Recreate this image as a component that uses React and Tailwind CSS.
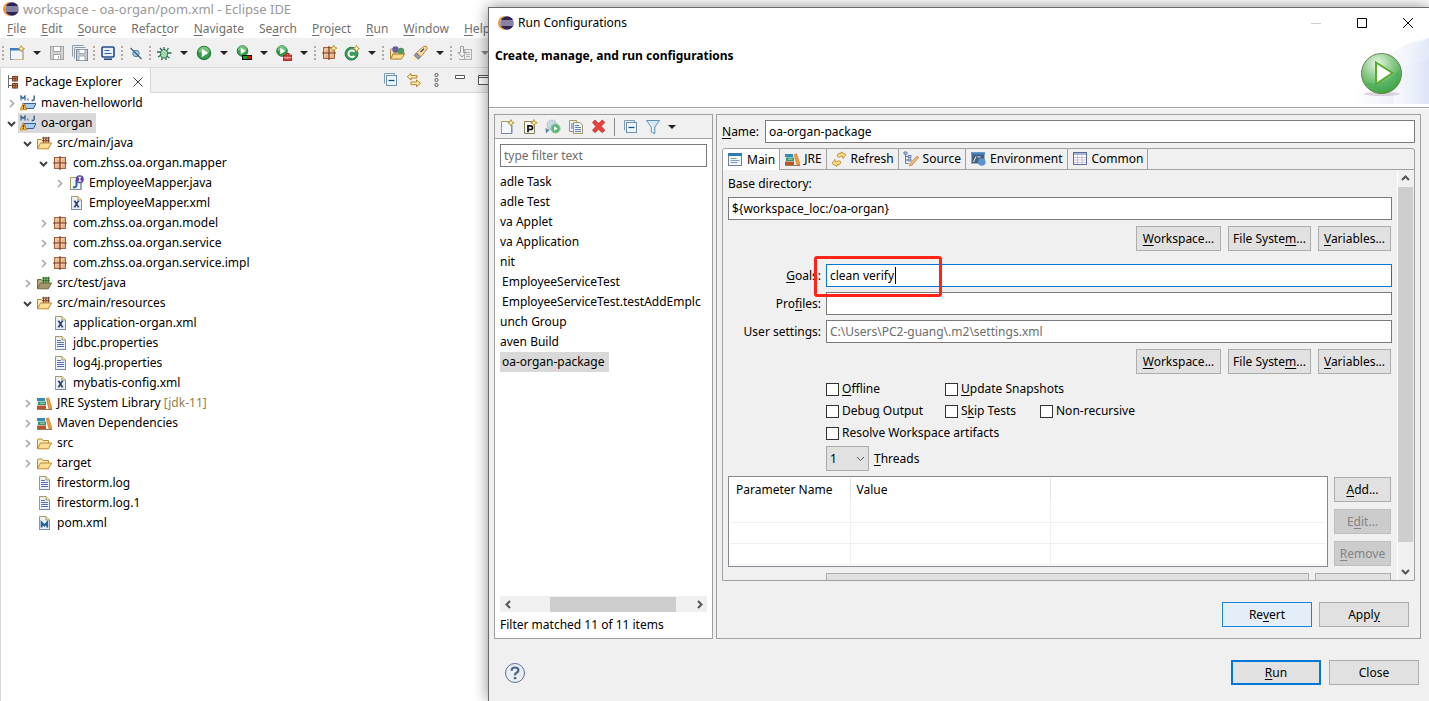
import { useState } from "react";

const Svg = ({ children, className = "" }) => (
  <svg width="16" height="16" viewBox="0 0 16 16" fill="none" className={`shrink-0 ${className}`} aria-hidden="true">
    {children}
  </svg>
);

const Star = ({ x, y }) => (
  <path
    transform={`translate(${x} ${y})`}
    d="M0-3.2L1-1 3.2 0 1 1 0 3.2-1 1-3.2 0-1-1Z"
    fill="#fff3b8"
    stroke="#b8902c"
    strokeWidth="0.9"
  />
);

const EclipseIcon = () => (
  <Svg>
    <circle cx="7" cy="8" r="7" fill="#f7941e" />
    <circle cx="9" cy="8" r="7" fill="#fff" />
    <circle cx="9" cy="8" r="6.8" fill="#2c2255" />
    <path d="M2.4 6h13.2M2 8h14M2.4 10h13.2" stroke="#e4e0ee" strokeWidth="1" />
  </Svg>
);

const NewWizardIcon = () => (
  <Svg>
    <rect x="1.5" y="3.5" width="12.5" height="11" fill="#eef6fb" stroke="#7d8ca0" />
    <rect x="1" y="3" width="11" height="2.5" fill="#3c7ec2" />
    <path d="M4 14.5h10V7" stroke="#d0bc78" strokeWidth="1.2" />
    <Star x={12.3} y={3.7} />
  </Svg>
);

const SaveIcon = () => (
  <Svg>
    <rect x="1.5" y="1.5" width="13" height="13" fill="#d2d2d2" stroke="#a3a3a3" />
    <rect x="4.5" y="1.5" width="7" height="5" fill="#fff" stroke="#a3a3a3" />
    <rect x="4.5" y="9.5" width="7" height="5" fill="#fff" stroke="#a3a3a3" />
    <path d="M9.5 11v2.5" stroke="#a3a3a3" />
  </Svg>
);

const SaveAllIcon = () => (
  <Svg>
    <path d="M.5 11.5V.5h11M2.5 13.5v-11h11" stroke="#8f9aa3" />
    <rect x="4.5" y="4.5" width="11" height="11" fill="#c4ced4" stroke="#7d8a94" />
    <rect x="7" y="4.5" width="6" height="4" fill="#fff" stroke="#8f9aa3" strokeWidth=".8" />
    <rect x="7" y="11" width="6" height="4.5" fill="#fff" stroke="#8f9aa3" strokeWidth=".8" />
  </Svg>
);

const ConsoleIcon = () => (
  <Svg>
    <rect x="2" y="2" width="12" height="10" rx="1" fill="#e8f0fa" stroke="#24498c" strokeWidth="1.6" />
    <path d="M4.5 5.5h5M4.5 8.5h7" stroke="#2f62a6" />
    <path d="M4 14.2h8" stroke="#24498c" strokeWidth="1.6" />
  </Svg>
);

const SkipIcon = () => (
  <Svg>
    <circle cx="8" cy="8.5" r="3.2" fill="#a6cbe0" stroke="#4a81a8" />
    <path d="M2.5 3l11 11" stroke="#3d5f80" strokeWidth="1.2" />
  </Svg>
);

const DebugIcon = () => (
  <Svg>
    <path
      d="M8 2v2M4 3l2 2.5M12.5 3L10.5 6M1 7h4M11 8h4.5M2 12l3-2M5.5 15l1-3M10 15V12M13.5 13l-3-2"
      stroke="#2c6a54"
      strokeWidth="1.3"
    />
    <ellipse cx="8" cy="8.8" rx="3.6" ry="4.2" fill="#8ecb9b" stroke="#2c7a56" />
    <path d="M6 7l4 4M6 10l3 2M7 5.5l4 3" stroke="#d9f2d5" strokeWidth=".8" />
  </Svg>
);

const PlayDisc = ({ cx = 8, cy = 8, r = 7 }) => (
  <g transform={`translate(${cx} ${cy}) scale(${r / 7})`}>
    <circle r="6.6" fill="#37a04c" stroke="#1d7a3a" strokeWidth="1.2" />
    <path d="M-5.6-1A5.6 5.6 0 0 1 5.6-1Q0 1-5.6-1Z" fill="#74c37b" />
    <path d="M-2.2-4.2L4.2 0-2.2 4.2Z" fill="#fff" />
  </g>
);

const RunIcon = () => (
  <Svg>
    <PlayDisc />
  </Svg>
);

const CoverageIcon = () => (
  <Svg>
    <PlayDisc cx={6.5} cy={6} r={5.6} />
    <rect x="6" y="10" width="10" height="5" fill="#111" />
    <rect x="7" y="11" width="4" height="3" fill="#0a2" />
    <rect x="11" y="11" width="4" height="3" fill="#d11" />
  </Svg>
);

const ExternalIcon = () => (
  <Svg>
    <PlayDisc cx={6} cy={6} r={5.6} />
    <path d="M10 10V8.6h3V10" stroke="#a82424" strokeWidth="1.2" />
    <rect x="7.5" y="10.2" width="8" height="5.2" fill="#d94343" stroke="#a82424" />
    <path d="M7.5 12.7h8M11.5 12v1.6" stroke="#fbd0d0" strokeWidth=".8" />
  </Svg>
);

const Grid = () => (
  <>
    <rect x="2.5" y="2.5" width="11" height="11" fill="#e5b085" stroke="#a4633f" />
    <path d="M4 7V4h3M9.5 7V4H12M4 12V9h3M9.5 12V9H12" stroke="#f5d9b4" />
    <path d="M8 1v14M1 8h14" stroke="#7d3f28" strokeWidth="1.2" />
  </>
);

const PackageIcon = () => (
  <Svg>
    <Grid />
  </Svg>
);

const NewPackageIcon = () => (
  <Svg>
    <Grid />
    <Star x={12.8} y={3.2} />
  </Svg>
);

const NewClassIcon = () => (
  <Svg>
    <circle cx="7.5" cy="8.7" r="6.4" fill="#3d9c5b" stroke="#1c7a41" />
    <path d="M10.4 6.7A3.3 3.3 0 1 0 10.4 10.8" stroke="#fff" strokeWidth="1.9" />
    <Star x={12.5} y={3.5} />
  </Svg>
);

const Folder = () => (
  <>
    <path d="M1.5 13.5V5q0-1 1-1H6l1 1.5h5.5V8" fill="#fbe9b8" stroke="#b98a36" />
    <path d="M1.5 13.8L4.5 8H15.6L12.3 13.8Z" fill="#fbdd94" stroke="#b98a36" strokeLinejoin="round" />
  </>
);

const OpenTypeIcon = () => (
  <Svg>
    <Folder />
    <circle cx="6.5" cy="4.5" r="3.2" fill="#6a58b0" />
    <circle cx="12" cy="6" r="3.2" fill="#4a9a5c" />
    <path d="M1.5 14L4.5 9.2H15.6L12.3 14Z" fill="#fbdd94" stroke="#b98a36" strokeLinejoin="round" />
  </Svg>
);

const TorchIcon = () => (
  <Svg>
    <path d="M0 16L2.5 9 7.5 13.5Z" fill="#fff0a0" />
    <path d="M4 8l4.5 4.2-2.3 2L2.2 10.5Z" fill="#8d99ad" stroke="#6a7284" strokeWidth=".8" />
    <path d="M4.5 7.5L12 1.2q3.2-.8 3.3 2.3L9 11.8Z" fill="#f8dca2" stroke="#c0843c" />
    <path d="M8.5 7L12 3.7" stroke="#2f4d80" strokeWidth="1.3" />
  </Svg>
);

const DownloadIcon = () => (
  <Svg>
    <rect x="7.5" y="4.5" width="7" height="10" fill="#e9e9e9" stroke="#b0b0b0" />
    <path d="M9 7.5h4M9 9.5h4M9 11.5h4" stroke="#b8b8b8" />
    <path d="M3.5 1.5h3v6H9l-4 4.5L1 7.5h2.5Z" fill="#f2f2f2" stroke="#9b9b9b" />
    <path d="M2 14.5h5" stroke="#aaa" />
  </Svg>
);

const ExplorerIcon = () => (
  <Svg>
    <path d="M3.5 1v13M3.5 4.5H7M3.5 11.5H7" stroke="#6c6c6c" />
    <rect x="7.5" y="2.5" width="5" height="4.5" fill="#d08b54" stroke="#7a3f22" />
    <rect x="7.5" y="9.5" width="5" height="4.5" fill="#d08b54" stroke="#7a3f22" />
    <path d="M10 2v5.5M7 4.7h6M10 9v5.5M7 11.7h6" stroke="#7a3f22" />
  </Svg>
);

const ProjectIcon = () => (
  <Svg>
    <path d="M1 5.5V1l2 2.6L5 1v4.5" stroke="#2f5f96" strokeWidth="1.2" />
    <path d="M7 3.5l1.5 2M8.5 3.5L7 5.5" stroke="#5586b8" />
    <path d="M14.2.5v3.8q0 1.6-2.6 1" stroke="#2f5f96" strokeWidth="1.4" />
    <path d="M4.5 8.5H16L13.5 13.5H5.5Z" fill="#a9cdf0" stroke="#2c5fa8" strokeLinejoin="round" />
    <path d="M2.5 8.5h11" stroke="#2c5fa8" />
    <path d="M3.4 7.8L6.8 14.8H0Z" fill="#f5b73c" stroke="#c4821c" strokeWidth=".8" />
    <path d="M3.4 10v2.4M3.4 13v1" stroke="#5c3400" strokeWidth="1.1" />
  </Svg>
);

const SourceFolder = ({ test }) => (
  <Svg>
    <path d="M1.5 13.5V4.5h4l1 1.2h6V9" fill={test ? "#b9ac86" : "#fbe9b8"} stroke={test ? "#75693c" : "#b98a36"} />
    <rect x="6.5" y="2.5" width="7" height="6" fill={test ? "#7fc06a" : "#e8b88a"} />
    <path d="M6.2 3h7.6M6.2 5.6h7.6M7.5 1.8v6.5M10 1.8v6.5M12.5 1.8v6.5" stroke={test ? "#286b2c" : "#6d4030"} strokeWidth=".9" />
    <path d="M1.5 13.8L4.5 8H15.6L12.3 13.8Z" fill={test ? "#a3966a" : "#fbdd94"} stroke={test ? "#75693c" : "#b98a36"} strokeLinejoin="round" />
  </Svg>
);

const FolderIcon = () => (
  <Svg>
    <Folder />
  </Svg>
);

const Page = () => (
  <>
    <path d="M3.5 1.5H10l3.5 3.5v9.5h-10Z" fill="#eaf1fb" stroke="#a79a5c" />
    <path d="M10 1.5V5h3.5" fill="#f3e2a6" stroke="#a79a5c" />
    <path d="M3 14.5h10.5V6" stroke="#7687a8" />
  </>
);

const XmlFileIcon = () => (
  <Svg>
    <Page />
    <path d="M6.6 6l3.8 6M10.4 6l-3.8 6" stroke="#27456f" strokeWidth="1.6" />
    <path d="M5.6 6.2h2.2M9.4 6.2h2M5.6 11.9h2M9.4 11.9h2" stroke="#27456f" strokeWidth=".8" />
  </Svg>
);

const TextFileIcon = () => (
  <Svg>
    <Page />
    <path d="M5 5.5h4M5 7.5h7M5 9.5h7M5 11.5h7" stroke="#5373aa" />
  </Svg>
);

const MavenFileIcon = () => (
  <Svg>
    <Page />
    <path d="M5.6 12.5v-5l2.8 3 2.8-3v5" stroke="#24629c" strokeWidth="1.9" />
  </Svg>
);

const InterfaceFileIcon = () => (
  <Svg>
    <path d="M2.5 2.5H13v12H2.5Z" fill="#eef4fc" stroke="#a79a5c" />
    <path d="M8.5 5v5.6q-.4 2.2-3.5 1.5" stroke="#2c69a8" strokeWidth="2" />
    <path d="M2.5 14.5H13V8" stroke="#7687a8" />
    <circle cx="11.8" cy="4.2" r="4" fill="#5b43a0" />
    <path d="M11.8 2.2v4M10.3 2.3h3M10.3 6.1h3" stroke="#fff" strokeWidth="1.1" />
  </Svg>
);

const LibraryIcon = () => (
  <Svg>
    <path d="M1 3h8v3H1Z" fill="#2f8cb8" />
    <path d="M2 6.5h8V10H2Z" fill="#37936a" />
    <path d="M1 10.5h9V14H1Z" fill="#b5562c" />
    <path d="M4 8.2h4.5" stroke="#a8dcb9" />
    <path d="M10.2 3.8l2.3-1L16 13.4l-2.9.8Z" fill="#f0a03a" stroke="#c87420" strokeWidth=".7" />
    <path d="M1 14.5h15" stroke="#87583b" strokeWidth=".8" />
  </Svg>
);

const CollapseAllIcon = () => (
  <Svg>
    <path d="M2.5 11.5v-10h10v2" stroke="#7e9dbb" />
    <rect x="4.5" y="3.5" width="10" height="10" fill="#eaf5fc" stroke="#7090ae" />
    <path d="M6.5 8.5h6" stroke="#12528c" strokeWidth="1.2" />
  </Svg>
);

const LinkIcon = () => (
  <Svg>
    <path d="M6 1.5L2.2 4.7 6 8V6h6V3.5H6Z" fill="#fdf0c4" stroke="#b9821d" strokeLinejoin="round" />
    <path d="M11.5 8l4 3.3-4 3.3v-2H6V10h5.5Z" fill="#fdf0c4" stroke="#b9821d" strokeLinejoin="round" />
  </Svg>
);

const ViewMenuIcon = () => (
  <Svg>
    <g stroke="#5b5b5b">
      <circle cx="8.5" cy="3" r="1.6" />
      <circle cx="8.5" cy="8" r="1.6" />
      <circle cx="8.5" cy="13" r="1.6" />
    </g>
  </Svg>
);

const NewConfigIcon = () => (
  <Svg>
    <path d="M2.5 2.5h10v12h-10Z" fill="#f2f7fd" stroke="#a79a5c" />
    <path d="M2.5 14.5H13V6" stroke="#7687a8" />
    <Star x={12} y={3.8} />
  </Svg>
);

const PrototypeIcon = () => (
  <Svg>
    <path d="M2.5 2.5h10v12h-10Z" fill="#f2f7fd" stroke="#8c8450" />
    <path d="M6 13.2V6.9h2.5q2 0 2 1.8t-2 1.8H6" stroke="#111" strokeWidth="1.7" />
    <Star x={12} y={3.8} />
  </Svg>
);

const ExportIcon = () => (
  <Svg>
    <circle cx="7" cy="6" r="4.8" fill="#c8d8e4" stroke="#9aafc0" strokeDasharray="2 1" />
    <path d="M.5 9L1 14.5 4.5 11Z" fill="#5884b0" />
    <circle cx="10.5" cy="9.5" r="4.6" fill="#5cb677" stroke="#8bcb9c" />
    <path d="M9.1 7.3l3.6 2.2-3.6 2.2Z" fill="#fff" />
  </Svg>
);

const DuplicateIcon = () => (
  <Svg>
    <path d="M1.5 1.5h7v11h-7Z" fill="#eef3fa" stroke="#a79a5c" />
    <path d="M3 5h3M3 7h3M3 9h3" stroke="#5373aa" />
    <path d="M5.5 3.5H12l2.5 2.5v8.5h-9Z" fill="#eef3fa" stroke="#a79a5c" />
    <path d="M7 6.5h4M7 8.5h6M7 10.5h6M7 12.5h6" stroke="#5373aa" strokeWidth=".9" />
  </Svg>
);

const DeleteIcon = () => (
  <Svg>
    <path
      d="M1.5 3.5L4 1 7.5 4.4 11.3 1 13.8 3.500 10.2 7.300 13.8 11.200 11.300 13.700 7.500 10.200 4 13.700 1.500 11.200 4.900 7.400Z"
      fill="#e8423f"
      stroke="#c22b2b"
      strokeWidth=".8"
    />
  </Svg>
);

const FilterIcon = () => (
  <Svg>
    <path d="M1.5 1.5h13L9.8 8v6.8L6.3 13V8Z" fill="#d3e8f7" stroke="#5f8fbd" strokeLinejoin="round" />
    <path d="M4.5 3.5l3 4v5" stroke="#fff" />
  </Svg>
);

const MainTabIcon = () => (
  <Svg>
    <rect x="1.5" y="1.5" width="13" height="12" fill="#f3f8fd" stroke="#65839f" />
    <path d="M1 2.5h14" stroke="#2f7cb5" strokeWidth="3" />
    <path d="M3.5 6.5h6M3.5 8.5h9M3.5 10.5h7" stroke="#7f9bc2" />
  </Svg>
);

const RefreshIcon = () => (
  <Svg>
    <path d="M6 5q.5-3.5 4.5-3L10 1l5 2.500-3 4-.6-2.300Q9 4.600 8.500 6.500Z" fill="#fbdd83" stroke="#b98226" strokeWidth=".8" />
    <path d="M10 11q-.5 3.500-4.500 3l.5 1.400-5-3 3-4 .6 2.300q2.400.8 2.900-1.200Z" fill="#fbdd83" stroke="#b98226" strokeWidth=".8" />
  </Svg>
);

const SourceTabIcon = () => (
  <Svg>
    <path d="M2.5 3v9.5h3M2.5 5.5h3M2.5 9h3" stroke="#5c7fae" />
    <path d="M1 1h3v2H1ZM5 4.5h3v2H5ZM5 8h3v2H5Z" fill="#d8e4f4" stroke="#3f669c" strokeWidth=".8" />
    <path d="M14 5l1.6 1.5L9.100 14l-2.600 1 .8-2.700Z" fill="#f6c17b" stroke="#c07c38" strokeWidth=".8" />
  </Svg>
);

const EnvironmentIcon = () => (
  <Svg>
    <rect x="1.5" y="1.5" width="13" height="11" fill="#46617f" stroke="#9daab8" />
    <path d="M1 2.5h14" stroke="#3f86c6" strokeWidth="2" />
    <path d="M3.5 11L6 5.5M7.5 6h3" stroke="#e8eef5" />
    <circle cx="11.8" cy="11" r="3.8" fill="#5c93cf" />
  </Svg>
);

const CommonIcon = () => (
  <Svg>
    <rect x="1.5" y="1.5" width="13" height="12" fill="#fff" stroke="#5a6c98" />
    <path d="M2 3h12" stroke="#a9b8d8" strokeWidth="2" />
    <path d="M5.5 4v9M10 4v9M2 6.5h12M2 9h12M2 11.5h12" stroke="#b9b3c8" strokeWidth=".8" />
  </Svg>
);

const HeaderArt = () => (
  <svg width="80" height="66" viewBox="0 0 80 66" className="shrink-0" aria-hidden="true">
    <defs>
      <linearGradient id="sky" x1="0" x2="1">
        <stop offset="0" stopColor="#ffffff" />
        <stop offset="1" stopColor="#dde4f6" />
      </linearGradient>
      <radialGradient id="ball" cx=".4" cy=".25" r=".8">
        <stop offset="0" stopColor="#e9f6e4" />
        <stop offset=".5" stopColor="#86c886" />
        <stop offset="1" stopColor="#2ea32e" />
      </radialGradient>
    </defs>
    <path d="M0 66Q30 8 80 0V66Z" fill="url(#sky)" opacity=".55" />
    <path d="M4 66Q30 28 80 22V66Z" fill="url(#sky)" />
    <path d="M44 66Q46 16 80 0V66Z" fill="url(#sky)" opacity=".7" />
    <ellipse cx="33" cy="56" rx="18" ry="2" fill="#cdc3cf" opacity=".7" />
    <circle cx="32.5" cy="35.5" r="20" fill="url(#ball)" stroke="#67834e" />
    <path d="M15 43Q30 52 50 32Q52 44 42 51Q26 58 15 43Z" fill="#48a860" opacity=".5" />
    <path d="M27 24.5V46l16.500-11Z" fill="#fff" stroke="#57ad2c" strokeWidth="2" />
  </svg>
);

const HelpIcon = () => (
  <svg width="22" height="22" viewBox="0 0 22 22" fill="none" aria-hidden="true">
    <circle cx="11" cy="11" r="9.5" fill="#e9eef5" stroke="#5d7190" />
    <path d="M7.6 8.8q0-3.3 3.4-3.3t3.4 2.7q0 1.5-1.8 2.6T11 13.4" stroke="#4d6388" strokeWidth="2.2" />
    <path d="M9.8 15h2.500v2.200H9.800Z" fill="#4d6388" />
  </svg>
);

const Caret = ({ fill = "#222" }) => (
  <svg width="8" height="4" viewBox="0 0 8 4" className="shrink-0" aria-hidden="true">
    <path d="M0 0h8L4 4Z" fill={fill} />
  </svg>
);

const CHEVRONS = {
  right: "M3 1l3.5 3.5L3 8",
  left: "M6 1L2.5 4.5 6 8",
  down: "M1 3l3.5 3.5L8 3",
  up: "M1 6l3.5-3.5L8 6",
};

const Chevron = ({ dir, color = "#555", width = 2 }) => (
  <svg width="9" height="9" viewBox="0 0 9 9" fill="none" className="shrink-0" aria-hidden="true">
    <path d={CHEVRONS[dir]} stroke={color} strokeWidth={width} />
  </svg>
);

// "&" marks the mnemonic letter
const Label = ({ text }) => {
  const at = text.indexOf("&");
  if (at < 0) return text;
  return (
    <>
      {text.slice(0, at)}
      <u className="underline underline-offset-2">{text[at + 1]}</u>
      {text.slice(at + 2)}
    </>
  );
};

const MENUS = ["&File", "&Edit", "&Source", "Refac&tor", "&Navigate", "Se&arch", "&Project", "&Run", "&Window", "&Help"];

const TOOLBAR = [
  { icon: NewWizardIcon, name: "New", menu: true },
  { icon: SaveIcon, name: "Save" },
  { icon: SaveAllIcon, name: "Save All" },
  "|",
  { icon: ConsoleIcon, name: "Console" },
  "|",
  { icon: SkipIcon, name: "Skip All Breakpoints" },
  "|",
  { icon: DebugIcon, name: "Debug", menu: true },
  { icon: RunIcon, name: "Run", menu: true },
  { icon: CoverageIcon, name: "Coverage", menu: true },
  { icon: ExternalIcon, name: "External Tools", menu: true },
  "|",
  { icon: NewPackageIcon, name: "New Java Package" },
  { icon: NewClassIcon, name: "New Java Class", menu: true },
  "|",
  { icon: OpenTypeIcon, name: "Open Type" },
  { icon: TorchIcon, name: "Search", menu: true },
  "|",
  { icon: DownloadIcon, name: "Next Annotation", menu: true, dim: true },
];

const TestFolderIcon = () => <SourceFolder test />;

const TREE = [
  { level: 0, icon: ProjectIcon, text: "maven-helloworld", open: false },
  { level: 0, icon: ProjectIcon, text: "oa-organ", open: true, selected: true },
  { level: 1, icon: SourceFolder, text: "src/main/java", open: true },
  { level: 2, icon: PackageIcon, text: "com.zhss.oa.organ.mapper", open: true },
  { level: 3, icon: InterfaceFileIcon, text: "EmployeeMapper.java", open: false },
  { level: 3, icon: XmlFileIcon, text: "EmployeeMapper.xml" },
  { level: 2, icon: PackageIcon, text: "com.zhss.oa.organ.model", open: false },
  { level: 2, icon: PackageIcon, text: "com.zhss.oa.organ.service", open: false },
  { level: 2, icon: PackageIcon, text: "com.zhss.oa.organ.service.impl", open: false },
  { level: 1, icon: TestFolderIcon, text: "src/test/java", open: false },
  { level: 1, icon: SourceFolder, text: "src/main/resources", open: true },
  { level: 2, icon: XmlFileIcon, text: "application-organ.xml" },
  { level: 2, icon: TextFileIcon, text: "jdbc.properties" },
  { level: 2, icon: TextFileIcon, text: "log4j.properties" },
  { level: 2, icon: XmlFileIcon, text: "mybatis-config.xml" },
  { level: 1, icon: LibraryIcon, text: "JRE System Library", note: "[jdk-11]", open: false },
  { level: 1, icon: LibraryIcon, text: "Maven Dependencies", open: false },
  { level: 1, icon: FolderIcon, text: "src", open: false },
  { level: 1, icon: FolderIcon, text: "target", open: false },
  { level: 1, icon: TextFileIcon, text: "firestorm.log" },
  { level: 1, icon: TextFileIcon, text: "firestorm.log.1" },
  { level: 1, icon: MavenFileIcon, text: "pom.xml" },
];

const INDENT = ["pl-1", "pl-5", "pl-9", "pl-13"];

const CONFIGS = [
  { text: "adle Task" },
  { text: "adle Test" },
  { text: "va Applet" },
  { text: "va Application" },
  { text: "nit" },
  { text: "EmployeeServiceTest", leaf: true },
  { text: "EmployeeServiceTest.testAddEmplc", leaf: true },
  { text: "unch Group" },
  { text: "aven Build" },
  { text: "oa-organ-package", leaf: true, selected: true },
];

const TABS = [
  { icon: MainTabIcon, text: "Main" },
  { icon: LibraryIcon, text: "JRE" },
  { icon: RefreshIcon, text: "Refresh" },
  { icon: SourceTabIcon, text: "Source" },
  { icon: EnvironmentIcon, text: "Environment" },
  { icon: CommonIcon, text: "Common" },
];

const BUTTON_KINDS = {
  normal: "border border-[#adadad] bg-[#e1e1e1]",
  hover: "border border-[#1883d7] bg-[#e3eef8]",
  primary: "border-2 border-[#0078d7] bg-[#e1e1e1]",
  disabled: "border border-[#bfbfbf] bg-[#cccccc] text-[#838383]",
};

const PushButton = ({ text, kind = "normal", className = "" }) => (
  <button
    type="button"
    disabled={kind === "disabled"}
    className={`h-[25px] whitespace-nowrap leading-none ${BUTTON_KINDS[kind]} ${className}`}
  >
    <Label text={text} />
  </button>
);

const LocationButtons = () => (
  <div className="flex justify-end gap-[7px] pr-px">
    <PushButton text="&Workspace..." className="w-[85px]" />
    <PushButton text="File Syste&m..." className="w-[83px]" />
    <PushButton text="&Variables..." className="w-[73px]" />
  </div>
);

const Check = ({ text, className = "" }) => (
  <label className={`flex items-center gap-[3px] ${className}`}>
    <input type="checkbox" className="size-[13px] appearance-none border border-[#333] bg-white checked:bg-[#333]" />
    <span>
      <Label text={text} />
    </span>
  </label>
);

const Grip = () => (
  <span className="flex w-[5px] flex-col items-center gap-[2px]">
    {[0, 1, 2, 3].map((i) => (
      <i key={i} className="size-[2px] bg-[#b5aca0]" />
    ))}
  </span>
);

const Workbench = () => (
  <div className="flex flex-1 flex-col">
    <div className="flex h-[18px] items-center gap-1 pl-[3px] text-[#999]">
      <EclipseIcon />
      <h1 className="text-[13px] leading-[18px]">workspace - oa-organ/pom.xml - Eclipse IDE</h1>
    </div>
    <nav className="flex h-5 items-center gap-[15px] pt-[2px] pl-[7px] text-[#707070]">
      {MENUS.map((m) => (
        <button type="button" key={m}>
          <Label text={m} />
        </button>
      ))}
    </nav>
    <div className="flex h-[30px] items-center border-b border-[#d8d8d8] bg-[#f0f0f0]">
      <Grip />
      {TOOLBAR.map((t, i) =>
        t === "|" ? (
          <Grip key={i} />
        ) : (
          <div key={i} className="flex">
            <button type="button" aria-label={t.name} className="flex w-[23px] justify-center">
              <t.icon />
            </button>
            {t.menu && (
              <button type="button" aria-label={`${t.name} menu`} className="flex w-[17px] items-center justify-center">
                <Caret fill={t.dim ? "#888" : "#222"} />
              </button>
            )}
          </div>
        )
      )}
    </div>
    <section className="flex w-[490px] flex-1 flex-col border-l border-[#d8d8d8]">
      <div className="flex h-[25px] bg-[#f0f0f0]">
        <div className="flex items-center gap-1 border-r border-[#d8d8d8] bg-white pt-[2px] pr-1 pl-1">
          <ExplorerIcon />
          <h2>Package Explorer</h2>
          <button type="button" aria-label="Close view" className="pl-1">
            <Svg>
              <path d="M3.5 3.5l9 9M12.5 3.5l-9 9" stroke="#444" />
            </Svg>
          </button>
        </div>
        <div className="flex flex-1 items-center justify-end gap-[7px] border-b border-[#d8d8d8]">
          <button type="button" aria-label="Collapse All">
            <CollapseAllIcon />
          </button>
          <button type="button" aria-label="Link with Editor">
            <LinkIcon />
          </button>
          <button type="button" aria-label="View Menu">
            <ViewMenuIcon />
          </button>
          <button type="button" aria-label="Minimize">
            <Svg>
              <path d="M4.5 3.5h9v3h-9Z" fill="#fff" stroke="#555" />
            </Svg>
          </button>
          <button type="button" aria-label="Maximize">
            <Svg>
              <path d="M4.5 3.5h10v9h-10ZM4.5 5.5h10" fill="#fff" stroke="#555" />
            </Svg>
          </button>
        </div>
      </div>
      <ul className="bg-white">
        {TREE.map((n, i) => (
          <li key={i} className={`flex h-5 items-center ${INDENT[n.level]}`}>
            <span className="flex w-[13px] justify-center">
              {n.open !== undefined && (
                <Chevron dir={n.open ? "down" : "right"} color={n.open ? "#404040" : "#a6a6a6"} width={n.open ? 2 : 1.5} />
              )}
            </span>
            <span className={`flex h-5 items-center gap-[5px] pr-1 pl-[2px] whitespace-nowrap ${n.selected ? "bg-[#d9d9d9]" : ""}`}>
              <n.icon />
              <span>
                {n.text} {n.note && <span className="text-[#957d47]">{n.note}</span>}
              </span>
            </span>
          </li>
        ))}
      </ul>
    </section>
  </div>
);

const ConfigList = () => (
  <div className="flex w-[219px] flex-col border border-[#a0a0a0] bg-white">
    <div className="flex h-6 shrink-0 items-center gap-[7px] border-b border-[#a0a0a0] bg-[#f0f0f0] pl-1">
      <button type="button" aria-label="New launch configuration"><NewConfigIcon /></button>
      <button type="button" aria-label="New prototype"><PrototypeIcon /></button>
      <button type="button" aria-label="Export"><ExportIcon /></button>
      <button type="button" aria-label="Duplicate"><DuplicateIcon /></button>
      <button type="button" aria-label="Delete"><DeleteIcon /></button>
      <span className="h-[18px] w-px bg-[#8c8c8c]" />
      <button type="button" aria-label="Collapse All"><CollapseAllIcon /></button>
      <button type="button" aria-label="Filter"><FilterIcon /></button>
      <button type="button" aria-label="Filter menu"><Caret /></button>
    </div>
    <div className="flex flex-1 flex-col px-[5px] pt-[5px] pb-1">
      <input
        type="text"
        aria-label="Filter"
        placeholder="type filter text"
        className="h-[23px] w-full border border-[#7a7a7a] px-[3px] outline-none placeholder:text-[#6d6d6d]"
      />
      <ul className="flex-1 overflow-hidden pt-[5px]">
        {CONFIGS.map((c) => (
          <li key={c.text} className="flex h-5 items-center whitespace-nowrap">
            <span className={`flex h-5 items-center ${c.leaf ? "pr-1 pl-[2px]" : ""} ${c.selected ? "bg-[#d9d9d9]" : ""}`}>
              {c.text}
            </span>
          </li>
        ))}
      </ul>
      <div className="flex h-4 items-center bg-[#f0f0f0]">
        <span className="flex w-4 justify-center"><Chevron dir="left" /></span>
        <span className="ml-[34px] h-[15px] w-[126px] bg-[#cdcdcd]" />
        <span className="ml-auto flex w-4 justify-center"><Chevron dir="right" /></span>
      </div>
      <p className="mt-1 leading-[18px]">Filter matched 11 of 11 items</p>
    </div>
  </div>
);

const FIELD = "h-[23px] min-w-0 border bg-white px-[3px] outline-none";

const MainTab = () => {
  const [goals, setGoals] = useState("clean verify");
  return (
    <div className="flex min-h-0 flex-1">
      <form className="min-w-0 flex-1 overflow-hidden px-[5px] pt-[5px]">
        <label htmlFor="base" className="block leading-[18px]">Base directory:</label>
        <input id="base" defaultValue="${workspace_loc:/oa-organ}" className={`${FIELD} mt-1 mb-[6px] block w-full border-[#7a7a7a]`} />
        <LocationButtons />
        <div className="mt-[13px] mb-[6px] grid grid-cols-[93px_1fr] items-center gap-[5px]">
          <label htmlFor="goals" className="text-right"><Label text="&Goals:" /></label>
          <div className="relative flex">
            <input
              id="goals"
              value={goals}
              onChange={(e) => setGoals(e.target.value)}
              className={`${FIELD} w-full border-[#0078d7] caret-transparent`}
            />
            <span className="absolute top-[3px] left-[69px] h-[17px] w-px bg-black" />
            <span className="absolute -top-2 -left-3 h-[41px] w-32 rounded-[3px] border-3 border-[#ff2318]" />
          </div>
          <label htmlFor="profiles" className="text-right"><Label text="Pro&files:" /></label>
          <input id="profiles" className={`${FIELD} border-[#7a7a7a]`} />
          <label htmlFor="settings" className="text-right whitespace-nowrap">User settings:</label>
          <input id="settings" defaultValue="C:\Users\PC2-guang\.m2\settings.xml" className={`${FIELD} border-[#7a7a7a] text-[#6d6d6d]`} />
        </div>
        <LocationButtons />
        <div className="mt-1 grid grid-cols-[119px_95px_1fr] pl-[98px] leading-[22px]">
          <Check text="&Offline" />
          <Check text="&Update Snapshots" className="col-span-2" />
          <Check text="Debu&g Output" />
          <Check text="S&kip Tests" />
          <Check text="Non-recursive" />
          <Check text="Resolve Workspace artifacts" className="col-span-3" />
        </div>
        <div className="mt-[2px] mb-[5px] flex items-center gap-[5px] pl-[98px]">
          <span className="relative flex items-center">
            <select id="threads" className="h-[25px] w-[43px] appearance-none border border-[#adadad] bg-[#e1e1e1] px-[3px] outline-none">
              <option>1</option>
              <option>2</option>
            </select>
            <span className="pointer-events-none absolute right-1">
              <Chevron dir="down" width={1} />
            </span>
          </span>
          <label htmlFor="threads"><Label text="&Threads" /></label>
        </div>
        <div className="flex gap-[6px] pr-px">
          <div className="flex-1 border border-[#828790] bg-white p-px">
            <table className="w-full table-fixed border-collapse">
              <colgroup>
                <col className="w-[120px]" />
                <col className="w-[200px]" />
                <col />
              </colgroup>
              <thead>
                <tr className="h-[23px]">
                  <th className="border-r border-[#e5e5e5] pl-[6px] text-left font-normal">Parameter Name</th>
                  <th className="border-r border-[#e5e5e5] pl-[6px] text-left font-normal">Value</th>
                  <th />
                </tr>
              </thead>
              <tbody>
                {[0, 1, 2].map((r) => (
                  <tr key={r} className="h-[21px] border-b border-[#f0f0f0]">
                    <td className="border-r border-[#f0f0f0]" />
                    <td className="border-r border-[#f0f0f0]" />
                    <td />
                  </tr>
                ))}
              </tbody>
            </table>
          </div>
          <div className="flex w-[57px] flex-col gap-[7px] pt-px">
            <PushButton text="&Add..." />
            <PushButton text="E&dit..." kind="disabled" />
            <PushButton text="&Remove" kind="disabled" />
          </div>
        </div>
        <div className="mt-[6px] flex gap-[6px] pr-px pl-[98px]">
          <span className="h-[25px] flex-1 border border-[#adadad] bg-[#dfe1e0]" />
          <span className="h-[25px] w-[76px] border border-[#adadad] bg-[#e1e1e1]" />
        </div>
      </form>
      <div className="flex w-[17px] flex-col items-center border-l border-white bg-[#f0f0f0] pr-px">
        <span className="flex h-[17px] items-center"><Chevron dir="up" /></span>
        <span className="w-[15px] flex-1 bg-[#cdcdcd]" />
        <span className="flex h-[38px] items-end pb-1"><Chevron dir="down" /></span>
      </div>
    </div>
  );
};

const Editor = () => (
  <div className="flex min-w-0 flex-1 flex-col border border-[#a0a0a0] px-[5px] pt-[5px] pb-[11px]">
    <div className="flex items-center gap-[6px]">
      <label htmlFor="name"><Label text="&Name:" /></label>
      <input id="name" defaultValue="oa-organ-package" className={`${FIELD} flex-1 border-[#7a7a7a]`} />
    </div>
    <div className="mt-[5px] flex min-h-0 flex-1 flex-col rounded-t-[3px] border border-[#a0a0a0]">
      <div role="tablist" className="flex h-[21px] shrink-0 border-b border-[#a0a0a0]">
        {TABS.map((t, i) => (
          <button
            type="button"
            role="tab"
            aria-selected={i === 0}
            key={t.text}
            className={`flex items-center gap-1 border-r border-[#a0a0a0] px-1 ${i === 0 ? "-mb-px rounded-tl-[3px] bg-white" : ""}`}
          >
            <t.icon />
            {t.text}
          </button>
        ))}
      </div>
      <MainTab />
    </div>
    <div className="mt-[21px] flex justify-end gap-[7px] pr-[6px]">
      <PushButton text="Re&vert" kind="hover" className="w-[90px]" />
      <PushButton text="Appl&y" className="w-[90px]" />
    </div>
  </div>
);

const RunDialog = () => (
  <div
    role="dialog"
    aria-label="Run Configurations"
    className="absolute top-[7px] right-0 bottom-0 left-[488px] flex flex-col border-t border-l border-[#6b6b6b] bg-[#f0f0f0] shadow-[0_0_14px_rgba(0,0,0,0.45)]"
  >
    <header className="flex h-[100px] shrink-0 flex-col border-b border-[#a0a0a0] bg-white">
      <div className="flex h-[30px] items-center pl-[9px]">
        <EclipseIcon />
        <h2 className="ml-1 flex-1">Run Configurations</h2>
        <button type="button" aria-label="Minimize" className="flex w-[42px] justify-center">
          <svg width="10" height="10"><path d="M0 5.5h10" stroke="#ccc" /></svg>
        </button>
        <button type="button" aria-label="Maximize" className="flex w-[50px] justify-center">
          <svg width="10" height="10" fill="none"><path d="M.5.5h9v9h-9Z" stroke="#000" /></svg>
        </button>
        <button type="button" aria-label="Close" className="flex w-[42px] justify-center">
          <svg width="10" height="10"><path d="M0 0l10 10M10 0L0 10" stroke="#000" /></svg>
        </button>
      </div>
      <div className="flex flex-1 justify-between">
        <h3 className="pt-[10px] pl-[6px] font-bold">Create, manage, and run configurations</h3>
        <HeaderArt />
      </div>
    </header>
    <div className="flex min-h-0 flex-1 gap-[3px] border-t border-white pt-[5px] pr-2 pl-[5px]">
      <ConfigList />
      <Editor />
    </div>
    <footer className="flex h-[62px] shrink-0 items-center gap-2 pt-[5px] pr-[10px] pl-[15px]">
      <button type="button" aria-label="Help" className="mr-auto">
        <HelpIcon />
      </button>
      <PushButton text="&Run" kind="primary" className="w-[90px]" />
      <PushButton text="Close" className="w-[90px]" />
    </footer>
  </div>
);

export default function App() {
  return (
    <div className="relative flex min-h-screen overflow-hidden bg-white font-['Noto_Sans','Open_Sans',sans-serif] text-xs text-black">
      <Workbench />
      <RunDialog />
    </div>
  );
}
